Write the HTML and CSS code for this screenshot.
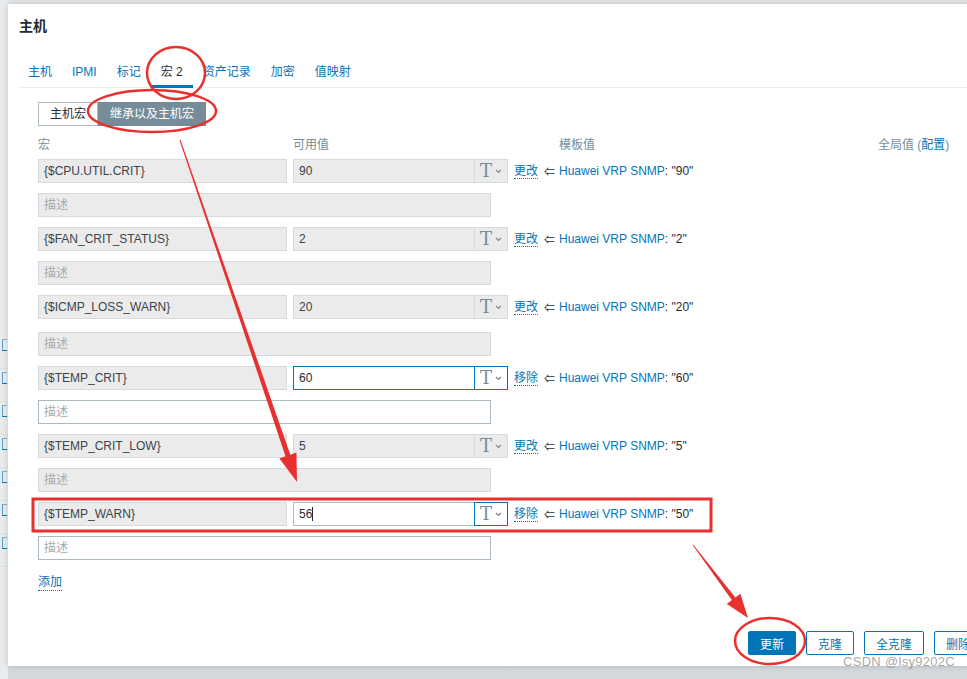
FILE: index.html
```html
<!DOCTYPE html>
<html lang="zh">
<head>
    <meta charset="UTF-8">
    <meta name="viewport" content="width=device-width, initial-scale=1.0">
    <title>主机 - 宏</title>
    <link rel="stylesheet" href="styles.css">
</head>
<body>

<!-- restos de la página de fondo, tapada por el diálogo -->
<div class="bg-strip">
    <span class="bg-link"></span>
    <span class="bg-link"></span>
    <span class="bg-link"></span>
    <span class="bg-link"></span>
    <span class="bg-link"></span>
    <span class="bg-link"></span>
    <span class="bg-link"></span>
</div>

<div class="dialog">
    <div class="dialog-header">主机</div>

    <ul class="tabs">
        <li class="tab">主机</li>
        <li class="tab">IPMI</li>
        <li class="tab">标记</li>
        <li class="tab tab-active">宏 2</li>
        <li class="tab">资产记录</li>
        <li class="tab">加密</li>
        <li class="tab">值映射</li>
    </ul>

    <div class="tab-body">
        <div class="radio-group">
            <span class="radio-btn">主机宏</span>
            <span class="radio-btn radio-active">继承以及主机宏</span>
        </div>

        <div class="macro-head">
            <span class="col-macro">宏</span>
            <span class="col-value">可用值</span>
            <span class="col-template">模板值</span>
            <span class="col-global">全局值 (<a class="link">配置</a>)</span>
        </div>

        <!-- filas de macros -->
        <div class="macro-row">
            <div class="field field-macro">{$CPU.UTIL.CRIT}</div>
            <div class="value-group">
                <div class="field field-value">90</div>
                <div class="type-btn"><span class="type-t">T</span><svg width="7" height="5" viewBox="0 0 7 5"><path d="M1 1l2.5 2.5L6 1" fill="none" stroke="#768d99" stroke-width="1.2"/></svg></div>
            </div>
            <a class="link link-dotted">更改</a>
            <span class="arrow">&lArr;</span>
            <span class="tpl"><a class="link">Huawei VRP SNMP</a>: "90"</span>
        </div>
        <div class="field field-desc">描述</div>

        <div class="macro-row">
            <div class="field field-macro">{$FAN_CRIT_STATUS}</div>
            <div class="value-group">
                <div class="field field-value">2</div>
                <div class="type-btn"><span class="type-t">T</span><svg width="7" height="5" viewBox="0 0 7 5"><path d="M1 1l2.5 2.5L6 1" fill="none" stroke="#768d99" stroke-width="1.2"/></svg></div>
            </div>
            <a class="link link-dotted">更改</a>
            <span class="arrow">&lArr;</span>
            <span class="tpl"><a class="link">Huawei VRP SNMP</a>: "2"</span>
        </div>
        <div class="field field-desc">描述</div>

        <div class="macro-row">
            <div class="field field-macro">{$ICMP_LOSS_WARN}</div>
            <div class="value-group">
                <div class="field field-value">20</div>
                <div class="type-btn"><span class="type-t">T</span><svg width="7" height="5" viewBox="0 0 7 5"><path d="M1 1l2.5 2.5L6 1" fill="none" stroke="#768d99" stroke-width="1.2"/></svg></div>
            </div>
            <a class="link link-dotted">更改</a>
            <span class="arrow">&lArr;</span>
            <span class="tpl"><a class="link">Huawei VRP SNMP</a>: "20"</span>
        </div>
        <div class="field field-desc desc-loose">描述</div>

        <div class="macro-row">
            <div class="field field-macro">{$TEMP_CRIT}</div>
            <div class="value-group value-focus">
                <div class="field field-value field-edit">60</div>
                <div class="type-btn"><span class="type-t">T</span><svg width="7" height="5" viewBox="0 0 7 5"><path d="M1 1l2.5 2.5L6 1" fill="none" stroke="#768d99" stroke-width="1.2"/></svg></div>
            </div>
            <a class="link link-dotted">移除</a>
            <span class="arrow">&lArr;</span>
            <span class="tpl"><a class="link">Huawei VRP SNMP</a>: "60"</span>
        </div>
        <div class="field field-desc field-edit">描述</div>

        <div class="macro-row">
            <div class="field field-macro">{$TEMP_CRIT_LOW}</div>
            <div class="value-group">
                <div class="field field-value">5</div>
                <div class="type-btn"><span class="type-t">T</span><svg width="7" height="5" viewBox="0 0 7 5"><path d="M1 1l2.5 2.5L6 1" fill="none" stroke="#768d99" stroke-width="1.2"/></svg></div>
            </div>
            <a class="link link-dotted">更改</a>
            <span class="arrow">&lArr;</span>
            <span class="tpl"><a class="link">Huawei VRP SNMP</a>: "5"</span>
        </div>
        <div class="field field-desc">描述</div>

        <div class="macro-row">
            <div class="field field-macro">{$TEMP_WARN}</div>
            <div class="value-group value-edit">
                <div class="field field-value field-edit">56<span class="caret"></span></div>
                <div class="type-btn type-focus"><span class="type-t">T</span><svg width="7" height="5" viewBox="0 0 7 5"><path d="M1 1l2.5 2.5L6 1" fill="none" stroke="#768d99" stroke-width="1.2"/></svg></div>
            </div>
            <a class="link link-dotted">移除</a>
            <span class="arrow">&lArr;</span>
            <span class="tpl"><a class="link">Huawei VRP SNMP</a>: "50"</span>
        </div>
        <div class="field field-desc field-edit">描述</div>

        <a class="link link-dotted add-link">添加</a>
    </div>

    <div class="dialog-footer">
        <button class="btn btn-primary">更新</button>
        <button class="btn">克隆</button>
        <button class="btn">全克隆</button>
        <button class="btn">删除</button>
    </div>
</div>

<!-- anotaciones rojas sobre la captura -->
<svg class="marks" width="967" height="679" viewBox="0 0 967 679">
    <g fill="none" stroke="#e8302e" stroke-width="2.5">
        <ellipse cx="176" cy="73" rx="29" ry="26"/>
        <ellipse cx="152" cy="111" rx="64" ry="21"/>
        <rect x="33" y="499" width="678" height="32" stroke-width="3"/>
        <ellipse cx="770" cy="641" rx="35" ry="23"/>
    </g>
    <g fill="#e8302e">
        <polygon points="179.5,140.2 285.5,456.3 279.4,458.4 297,482 296.4,452.6 290.3,454.7 180.5,139.8"/>
        <polygon points="692.7,545.2 731.8,600.1 726.8,603.9 748,618 740.4,593.7 735.4,597.5 693.3,544.8"/>
    </g>
</svg>

<div class="watermark">CSDN @lsy9202C</div>

</body>
</html>
```

FILE: styles.css
```css
body {
    margin: 0;
    height: 679px;
    overflow: hidden;
    display: flex;
    align-items: flex-start;
    background: linear-gradient(#e3e7e9, #d3d9dc);
    font-family: "Liberation Sans", Arial, "Noto Sans CJK SC", sans-serif;
    font-size: 12px;
    color: #1f2c33;
}
.bg-strip {
    width: 8px;
    height: 679px;
    flex-shrink: 0;
    overflow: hidden;
    padding-top: 336px;
    box-sizing: border-box;
    background: #e9ecee;
}
.bg-link {
    display: block;
    height: 30px;
    border-bottom: 1px solid #dde2e5;
    box-sizing: border-box;
}
.bg-link::before {
    content: "";
    display: block;
    width: 4px;
    height: 10px;
    margin: 3px 0 0 2px;
    border-left: 1px solid #5a9ccc;
    border-bottom: 1px solid #0275b8;
    border-top: 1px solid #7fb0d6;
}
.dialog {
    width: 985px;
    height: 662px;
    margin-top: 4px;
    flex-shrink: 0;
    background: #fff;
    box-shadow: 0 0 6px rgba(0, 0, 0, 0.18);
    display: flex;
    flex-direction: column;
    padding: 0 11px;
    box-sizing: border-box;
}
.dialog-header {
    padding-top: 14px;
    line-height: 16px;
    font-size: 14px;
    font-weight: bold;
}
.tabs {
    list-style: none;
    margin: 22px 0 0 -1px;
    padding: 0;
    display: flex;
    border-bottom: 1px solid #ebeef0;
}
.tab {
    padding: 8px 10px 5px;
    line-height: 16px;
    color: #0275b8;
    border-bottom: 3px solid transparent;
    margin-bottom: -1px;
}
.tab-active {
    color: #1f2c33;
    border-bottom-color: #0275b8;
}
.tab-body {
    padding-left: 19px;
}
.radio-group {
    display: flex;
    margin-top: 14px;
}
.radio-btn {
    height: 24px;
    line-height: 22px;
    padding: 0 11px;
    border: 1px solid #acbbc2;
    box-sizing: border-box;
    background: #fff;
}
.radio-active {
    background: #768d99;
    border-color: #768d99;
    color: #fff;
}
.macro-head {
    display: flex;
    margin-top: 12px;
    line-height: 14px;
    color: #768d99;
}
.col-macro { width: 255px; }
.col-value { width: 266px; }
.col-template { width: 319px; }
.macro-row {
    display: flex;
    align-items: center;
    gap: 6px;
    margin-top: 7px;
}
.macro-row + .field-desc {
    margin-top: 10px;
}
.field-desc + .macro-row {
    margin-top: 10px;
}
.field-desc.desc-loose {
    margin-top: 13px;
}
.field {
    height: 24px;
    line-height: 22px;
    padding: 0 5px;
    box-sizing: border-box;
    background: #ebebeb;
    border: 1px solid #d3dbdf;
    color: #3a454b;
    white-space: nowrap;
}
.field-macro {
    width: 249px;
}
.field-desc {
    width: 453px;
    color: #a3acb0;
}
.field-edit {
    background: #fff;
    border-color: #acbbc2;
}
.value-group {
    display: flex;
    width: 215px;
}
.field-value {
    flex: 1;
    border-right: none;
}
.value-group .field-edit {
    color: #1f2c33;
}
.value-focus .field,
.value-focus .type-btn {
    border-color: #0275b8;
}
.type-btn {
    width: 34px;
    height: 24px;
    box-sizing: border-box;
    border: 1px solid #d3dbdf;
    background: #ebebeb;
    display: flex;
    align-items: center;
    justify-content: center;
    gap: 3px;
}
.value-edit .type-btn,
.value-focus .type-btn {
    background: #fff;
}
.type-focus {
    border-color: #0275b8;
}
.type-t {
    font-family: "DejaVu Serif", "Liberation Serif", serif;
    font-size: 18px;
    line-height: 20px;
    color: #768d99;
}
.caret {
    display: inline-block;
    width: 1px;
    height: 14px;
    background: #1f2c33;
    vertical-align: -3px;
}
.link {
    color: #0275b8;
    text-decoration: none;
}
.link-dotted {
    border-bottom: 1px dotted #0275b8;
    line-height: 14px;
}
.arrow {
    font-size: 11px;
    color: #1f2c33;
    margin-right: -2px;
}
.add-link {
    display: inline-block;
    margin-top: 15px;
    line-height: 15px;
}
.dialog-footer {
    margin-top: auto;
    margin-bottom: 11px;
    display: flex;
    justify-content: flex-end;
    gap: 10px;
}
.btn {
    height: 24px;
    padding: 0 11px;
    border: 1px solid #0275b8;
    border-radius: 2px;
    background: #fff;
    color: #0275b8;
    font-family: inherit;
    font-size: 12px;
}
.btn-primary {
    background: #0275b8;
    color: #fff;
}
.marks {
    position: absolute;
    top: 0;
    left: 0;
    pointer-events: none;
}
.watermark {
    position: absolute;
    left: 843px;
    top: 654px;
    font-size: 13px;
    color: rgba(150, 150, 150, 0.85);
    letter-spacing: 0.3px;
}
```
